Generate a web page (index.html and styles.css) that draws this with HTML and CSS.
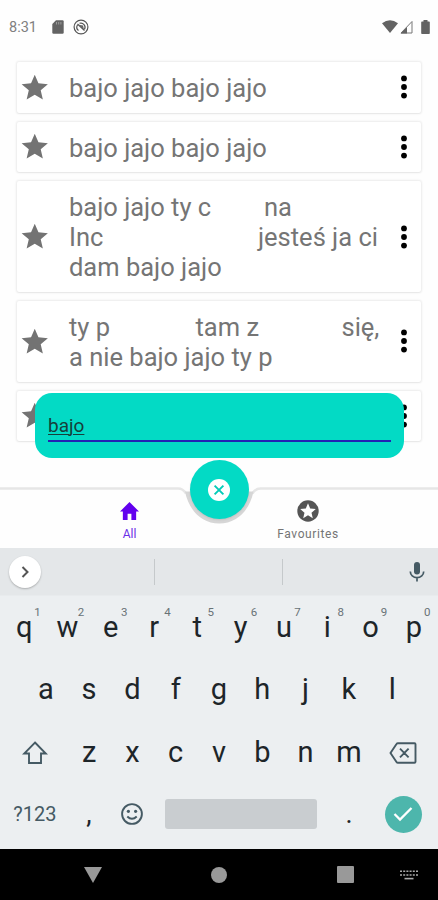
FILE: index.html
```html
<!DOCTYPE html>
<html lang="pl">
<head>
<meta charset="utf-8">
<title>Bajo jajo</title>
<link rel="stylesheet" href="styles.css">
</head>
<body>
<svg class="defs" width="0" height="0">
  <symbol id="star" viewBox="0 0 24 24"><path d="M12 17.27 18.18 21l-1.64-7.03L22 9.24l-7.19-.61L12 2 9.19 8.63 2 9.24l5.46 4.73L5.82 21z"/></symbol>
  <symbol id="more" viewBox="0 0 8 24"><circle cx="4" cy="3.4" r="2.9"/><circle cx="4" cy="12" r="2.9"/><circle cx="4" cy="20.6" r="2.9"/></symbol>
</svg>
<header class="status">
  <span class="clock">8:31</span>
  <svg class="sd" width="12" height="14" viewBox="0 0 12 14"><path d="M4 .3h6.5q1.2 0 1.2 1.2v11q0 1.2-1.2 1.2h-9Q.3 13.700.3 12.500V4z"/><path d="M4.500 2v2.500M6.700 2v2.500M8.900 2v2.500" stroke="#aaa" stroke-width=".8"/></svg>
  <svg class="sync" width="16" height="16" viewBox="0 0 16 16"><circle cx="8" cy="8" r="6.900" fill="none" stroke="#555" stroke-width="1.200"/><path d="M5.500 11.500a4.200 4.200 0 0 1-1-5.500M6.500 4.300a4.200 4.200 0 0 1 5 6M4.500 5l7 6.500" fill="none" stroke="#555" stroke-width="1.200"/><path d="M6 5.800l4 .7 1 4z"/></svg>
  <span class="spacer"></span>
  <svg width="16" height="13" viewBox="0 0 16 13"><path d="M0 3.200Q8-2.800 16 3.200L8 13z"/></svg>
  <svg class="signal" width="13" height="14" viewBox="0 0 13 14"><path d="M12 1.500V13H1z" fill="none" stroke="#777" stroke-width="1"/><path d="M7 7v6.500H.5z"/></svg>
  <svg class="battery" width="9" height="14" viewBox="0 0 9 14"><path d="M2.500 0h4v1.400H8q.8 0 .8.800v11q0 .8-.8.800H1q-.8 0-.8-.8v-11q0-.8.8-.8h1.500z"/></svg>
</header>

<main class="list">
  <article class="card"><svg class="star"><use href="#star"/></svg><p>bajo jajo bajo jajo</p><svg class="more"><use href="#more"/></svg></article>
  <article class="card"><svg class="star"><use href="#star"/></svg><p>bajo jajo bajo jajo</p><svg class="more"><use href="#more"/></svg></article>
  <article class="card"><svg class="star"><use href="#star"/></svg><p><span class="col-a">bajo jajo ty c</span>na<br><span class="col-b">Inc</span>jesteś ja ci<br>dam bajo jajo</p><svg class="more"><use href="#more"/></svg></article>
  <article class="card"><svg class="star"><use href="#star"/></svg><p><span class="col-c">ty p</span><span class="col-d">tam z</span>się,<br>a nie bajo jajo ty p</p><svg class="more"><use href="#more"/></svg></article>
  <article class="card"><svg class="star"><use href="#star"/></svg><p></p><svg class="more"><use href="#more"/></svg></article>
  <div class="search"><div class="field"><span>bajo</span></div></div>
</main>

<nav class="tabs">
  <svg class="bar" width="438" height="66" viewBox="0 0 438 66"><path class="lip" d="M0 6.500H178Q183 6.500 186 11.500M252.500 11.500Q255.500 6.500 260.500 6.500H438"/><path class="shade" d="M185 9.500C189 28 201 41.500 219.200 41.500S249.500 28 253.500 9.500z"/></svg>
  <a class="tab active"><svg width="19" height="18" viewBox="2 3 20 17" preserveAspectRatio="none"><path d="M10 20v-6h4v6h5v-8h3L12 3 2 12h3v8z"/></svg><span>All</span></a>
  <a class="tab fav"><svg width="22" height="22" viewBox="0 0 22 22"><circle cx="11" cy="11" r="10.700"/><path fill="#fff" d="M11 3.300l2.200 5.200 5.600.5-4.300 3.700 1.300 5.500-4.800-2.900-4.800 2.900 1.300-5.500L3.200 9l5.600-.5z"/></svg><span>Favourites</span></a>
  <button class="fab"><svg width="22" height="22" viewBox="0 0 22 22"><circle cx="11" cy="11" r="11" fill="#fff"/><path d="M6.600 6.600l8.800 8.800M15.400 6.600l-8.800 8.800" stroke="#03cbb8" stroke-width="1.900"/></svg></button>
</nav>

<section class="keyboard">
  <div class="strip">
    <span class="expand"><svg width="32" height="32" viewBox="0 0 32 32"><path d="M13.500 11l5 5-5 5" fill="none" stroke="#555" stroke-width="2"/></svg></span>
    <i></i><i></i>
    <svg class="mic" width="16" height="20" viewBox="0 0 16 20"><rect x="5" y="0" width="6" height="12.500" rx="3"/><path d="M1.300 9.500a6.700 6.200 0 0 0 13.400 0M8 15.500V19.500" fill="none" stroke="#455a64" stroke-width="1.700"/></svg>
  </div>
  <div class="row">
    <b>q<sup>1</sup></b><b>w<sup>2</sup></b><b>e<sup>3</sup></b><b>r<sup>4</sup></b><b>t<sup>5</sup></b><b>y<sup>6</sup></b><b>u<sup>7</sup></b><b>i<sup>8</sup></b><b>o<sup>9</sup></b><b>p<sup>0</sup></b>
  </div>
  <div class="row"><b>a</b><b>s</b><b>d</b><b>f</b><b>g</b><b>h</b><b>j</b><b>k</b><b>l</b></div>
  <div class="row">
    <b class="wide"><svg class="shift" width="26" height="24" viewBox="0 0 26 24"><path d="M13 1.500L23.800 12.500H19V22H7V12.500H2.200z"/></svg></b>
    <b>z</b><b>x</b><b>c</b><b>v</b><b>b</b><b>n</b><b>m</b>
    <b class="wide"><svg class="erase" width="28" height="22" viewBox="0 0 28 22"><path d="M9 1.200H25.500q1 0 1 1V19.800q0 1-1 1H9q-1 0-1.500-.8L1.500 11 7.500 2q.5-.8 1.500-.8zM11 6.700l8.600 8.600M19.600 6.700l-8.600 8.600"/></svg></b>
  </div>
  <div class="row">
    <b class="wide sym">?123</b><b class="punct">,</b>
    <b><svg width="22" height="22" viewBox="0 0 22 22"><circle cx="11" cy="11" r="9.900"/><path d="M6.300 13.500q4.700 4.700 9.400 0"/><circle class="eye" cx="7.400" cy="8.300" r="1.600"/><circle class="eye" cx="14.600" cy="8.300" r="1.600"/></svg></b>
    <b class="space"></b><b class="punct">.</b>
    <b class="wide"><span class="done"><svg width="20" height="16" viewBox="0 0 20 16"><path d="M1.500 8l5.500 5.500L18.500 2"/></svg></span></b>
  </div>
</section>

<footer class="system">
  <svg width="18" height="16" viewBox="0 0 18 16"><path d="M0 0h18L9 16z"/></svg>
  <svg width="16" height="16" viewBox="0 0 16 16"><circle cx="8" cy="8" r="8"/></svg>
  <svg width="17" height="17" viewBox="0 0 17 17"><rect width="17" height="17" rx="1"/></svg>
  <svg width="18" height="10" viewBox="0 0 18 10"><path d="M0 1.200h18M0 4.900h18" stroke="#aaa" stroke-width="1.500" stroke-dasharray="2 1.200"/><path d="M4.500 8.600h9" stroke="#aaa" stroke-width="1.600"/></svg>
</footer>
</body>
</html>
```
FILE: styles.css
```css
* { box-sizing: border-box; }
body {
  margin: 0;
  width: 438px;
  height: 900px;
  overflow: hidden;
  display: flex;
  flex-direction: column;
  background: #fefefe;
  font-family: Roboto, "Liberation Sans", sans-serif;
}
svg { display: block; flex: none; }
.defs { position: absolute; }

.status {
  height: 61px;
  padding: 7px 8px 15px 9px;
  display: flex;
  align-items: center;
  fill: #636363;
}
.clock { position: relative; top: 1px; width: 43px; font-size: 14.500px; color: #808080; }
.sync { margin-left: 9px; }
.spacer { flex: 1; }
.signal { margin-left: 2px; }
.battery { margin-left: 8px; }

.list {
  position: relative;
  height: 421px;
  padding: 1px 17px 0;
  display: flex;
  flex-direction: column;
  gap: 9px;
}
.card {
  display: flex;
  align-items: center;
  min-height: 50.700px;
  padding: 10.350px 0;
  background: #fff;
  border-radius: 2px;
  box-shadow: 0 0 2px 1px rgba(0, 0, 0, .075), 0 1px 1px rgba(0, 0, 0, .03);
  flex: none;
}
.card p {
  position: relative;
  top: .6px;
  margin: 0;
  flex: 1;
  min-height: 30px;
  font-size: 25.500px;
  line-height: 30px;
  color: #757575;
  white-space: nowrap;
}
.star { width: 31.500px; height: 31.500px; margin: -2px 18.700px -2px 1.800px; fill: #737373; }
.more { width: 8px; height: 24px; margin-right: 13px; }
.col-a, .col-b, .col-c, .col-d { display: inline-block; }
.col-a { width: 195px; }
.col-b { width: 189px; }
.col-c { width: 126.500px; }
.col-d { width: 146px; }

.search {
  position: absolute;
  left: 35px;
  top: 332px;
  width: 369px;
  height: 65px;
  padding: 19px 13px 0;
  border-radius: 17px;
  background: #03dac5;
}
.field {
  height: 30px;
  border-bottom: 2px solid #2222b4;
  font-size: 19px;
  line-height: 27px;
  color: #163f3b;
}
.field span { text-decoration: underline; text-decoration-thickness: 1px; text-underline-offset: 2px; }

.tabs {
  position: relative;
  height: 66px;
  display: flex;
  justify-content: space-between;
  padding: 18px 90px 0 89.500px;
}
.bar { position: absolute; left: 0; top: 0; }
.lip { fill: none; stroke: #e6e6e6; stroke-width: 2.500; }
.shade { fill: #d6d6d6; }
.tab {
  position: relative;
  width: 80px;
  display: flex;
  flex-direction: column;
  align-items: center;
  font-size: 12px;
  line-height: 14px;
  color: #757575;
  fill: #555;
}
.tab span { margin-top: 5px; letter-spacing: .6px; }
.active { color: #6a2fe8; fill: #6200ee; }
.active svg { margin: 2px 0; }
.active span { letter-spacing: 0; }
.fab {
  position: absolute;
  left: 189.500px;
  top: -22px;
  width: 59px;
  height: 59px;
  padding: 0;
  border: 0;
  border-radius: 50%;
  background: #03dac5;
  display: grid;
  place-items: center;
  box-shadow: 0 1px 2px rgba(0, 0, 0, .1);
}

.keyboard { position: relative; height: 301px; background: #eceff1; }
.strip {
  height: 48px;
  padding: 0 13px 0 9px;
  display: flex;
  align-items: center;
  background: #e4e7e9;
  border-bottom: 1px solid #e8ebed;
}
.expand { width: 32px; height: 32px; border-radius: 50%; background: #fff; box-shadow: 0 1px 2px rgba(0, 0, 0, .25); }
.strip i { width: 1px; height: 26px; margin-left: 113px; background: #c5c9cb; }
.strip i + i { margin-left: 127px; }
.mic { margin-left: auto; fill: #455a64; }
.row { height: 62.300px; padding: 0 2.500px; display: flex; justify-content: center; }
.row b {
  position: relative;
  width: 43.300px;
  display: flex;
  align-items: center;
  justify-content: center;
  font-size: 29px;
  font-weight: 400;
  line-height: 62px;
  color: #1d2529;
  fill: none;
  stroke: #455a64;
  stroke-width: 1.900;
}
.row sup { position: absolute; right: 5px; top: 8.500px; font-size: 11.500px; line-height: 14px; color: #687276; }
.row .wide { width: 64.950px; }
.row .sym { font-size: 20px; color: #455a64; }
.row .punct { font-size: 27px; }
.row .eye { fill: #455a64; stroke: none; }
.shift, .erase { position: relative; top: 1.500px; }
.row .space { width: 152px; height: 30px; margin: 16px 10.800px 0; border-radius: 3px; background: #c9cdd0; }
.done { width: 37px; height: 37px; border-radius: 50%; background: #4db6ac; display: grid; place-items: center; }
.done path { stroke: #fff; stroke-width: 2.300; }

.system {
  height: 51px;
  padding: 0 20px 0 84px;
  display: flex;
  align-items: center;
  background: #000;
  fill: #999;
}
.system svg:nth-child(2) { margin-left: 109px; }
.system svg:nth-child(3) { margin-left: 110px; }
.system svg:nth-child(4) { margin-left: 46px; }
```
